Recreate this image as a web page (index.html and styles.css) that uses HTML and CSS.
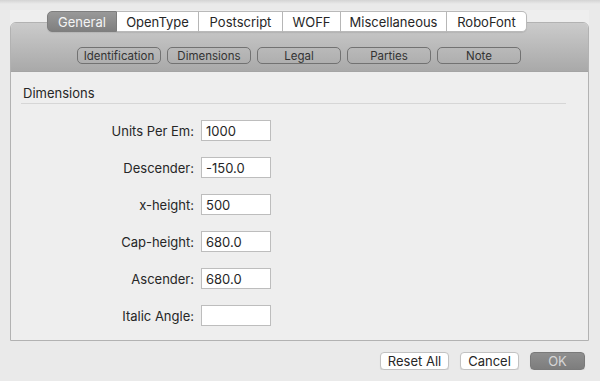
FILE: index.html
```html
<!DOCTYPE html>
<html lang="en">
<head>
  <meta charset="UTF-8" />
  <title>Font Info</title>
  <link rel="stylesheet" href="styles.css">
</head>
<body>
  <div class="sombra"></div>

  <div class="marco">
    <div class="pestanas">
      <span class="pestana activa">General</span>
      <span class="pestana">OpenType</span>
      <span class="pestana">Postscript</span>
      <span class="pestana">WOFF</span>
      <span class="pestana">Miscellaneous</span>
      <span class="pestana">RoboFont</span>
    </div>

    <div class="caja">
      <div class="cabecera">
        <span class="sub">Identification</span>
        <span class="sub">Dimensions</span>
        <span class="sub">Legal</span>
        <span class="sub">Parties</span>
        <span class="sub">Note</span>
      </div>

      <div class="contenido">
        <div class="titulo">Dimensions</div>

        <div class="campos">
          <div class="fila"><label>Units Per Em:</label><input type="text" value="1000"></div>
          <div class="fila"><label>Descender:</label><input type="text" value="-150.0"></div>
          <div class="fila"><label>x-height:</label><input type="text" value="500"></div>
          <div class="fila"><label>Cap-height:</label><input type="text" value="680.0"></div>
          <div class="fila"><label>Ascender:</label><input type="text" value="680.0"></div>
          <div class="fila"><label>Italic Angle:</label><input type="text" value=""></div>
        </div>
      </div>
    </div>
  </div>

  <div class="botones">
    <button class="boton reset">Reset All</button>
    <button class="boton cancelar">Cancel</button>
    <button class="boton ok">OK</button>
  </div>
</body>
</html>
```

FILE: styles.css
```css
body {
  margin: 0;
  padding: 0;
  background: #eaeaea;
  font-family: Inter, 'Liberation Sans', Arial, sans-serif;
  font-size: 13px;
  color: #262626;
}

.sombra {
  height: 4px;
  margin-bottom: 6px;
  background: linear-gradient(#d4d4d4, #eaeaea);
}

.marco {
  margin-left: 10px;
  width: 579px;
  padding-top: 1px;
  background: #eeeeee;
}

.pestanas {
  display: flex;
  margin-left: 37px;
  margin-bottom: -10px;
  height: 21px;
  position: relative;
  z-index: 1;
}

.pestana {
  display: flex;
  align-items: center;
  justify-content: center;
  background: #fff;
  border: 1px solid #b9b9b9;
  border-left: none;
  box-sizing: border-box;
  height: 21px;
  font-size: 13px;
  color: #262626;
  box-shadow: 0 1px 1px rgba(0, 0, 0, 0.08);
}

.pestana:nth-child(1) { width: 70px; }
.pestana:nth-child(2) { width: 82px; }
.pestana:nth-child(3) { width: 84px; }
.pestana:nth-child(4) { width: 58px; }
.pestana:nth-child(5) { width: 106px; }
.pestana:nth-child(6) { width: 80px; }

.pestana:first-child {
  border-left: 1px solid #8a8a8a;
  border-radius: 5px 0 0 5px;
}

.pestana:last-child {
  border-radius: 0 5px 5px 0;
}

.pestana.activa {
  background: linear-gradient(#999999, #7f7f7f);
  border-color: #7e7e7e;
  color: #f4f4f4;
}

.caja {
  box-sizing: border-box;
  height: 319px;
  border: 1px solid #b2b2b2;
  border-radius: 6px 6px 0 0;
  background: #eeeeee;
  overflow: hidden;
}

.cabecera {
  height: 49px;
  border-bottom: 1px solid #a4a4a4;
  background: linear-gradient(#cbcbcb, #a9a9a9);
  display: flex;
  gap: 6px;
  padding: 24px 0 0 66px;
  box-sizing: border-box;
}

.sub {
  width: 84px;
  height: 17px;
  box-sizing: border-box;
  border: 1px solid #727272;
  border-radius: 5px;
  display: flex;
  align-items: center;
  justify-content: center;
  font-size: 11.5px;
  color: #333;
}

.contenido {
  padding: 13px 22px 0 10px;
}

.titulo {
  font-size: 13px;
  padding-left: 2px;
  height: 18px;
  border-bottom: 1px solid #d6d6d6;
  margin-bottom: 16px;
}

.campos {
  display: flex;
  flex-direction: column;
  gap: 16px;
}

.fila {
  display: flex;
  align-items: center;
  gap: 7px;
}

.fila label {
  width: 173px;
  text-align: right;
  font-size: 13px;
  color: #262626;
}

.fila input {
  width: 70px;
  height: 21px;
  box-sizing: border-box;
  border: 1px solid #bdbdbd;
  background: #fff;
  font-family: Inter, 'Liberation Sans', Arial, sans-serif;
  font-size: 13px;
  color: #262626;
  padding: 1px 4px 0;
  margin: 0;
  outline: none;
}

.botones {
  display: flex;
  justify-content: flex-end;
  gap: 11px;
  padding: 11px 15px 0 0;
}

.boton {
  height: 18px;
  box-sizing: border-box;
  border: 1px solid #c2c2c2;
  border-radius: 4px;
  background: #fff;
  font-family: Inter, 'Liberation Sans', Arial, sans-serif;
  font-size: 13px;
  color: #262626;
  padding: 0;
  box-shadow: 0 1px 1px rgba(0, 0, 0, 0.1);
}

.reset { width: 69px; }
.cancelar { width: 59px; }

.ok {
  width: 55px;
  background: linear-gradient(#8f8f8f, #7d7d7d);
  border-color: #7a7a7a;
  color: #d6d6d6;
}
```
